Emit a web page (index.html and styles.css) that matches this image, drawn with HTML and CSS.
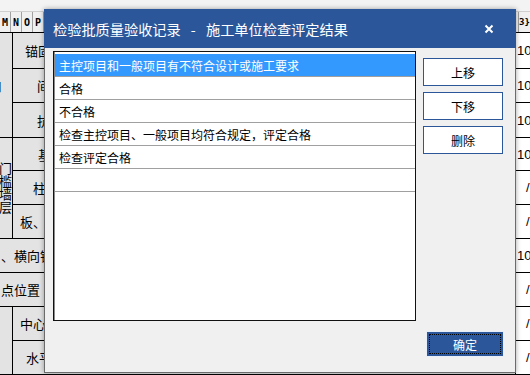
FILE: index.html
```html
<!DOCTYPE html>
<html lang="zh-CN">
<head>
  <meta charset="UTF-8" />
  <title>检验批质量验收记录</title>
  <link rel="stylesheet" href="styles.css">
</head>
<body>
  <!-- hoja de fondo -->
  <div class="sheet">
    <div class="topband"></div>
    <div class="colhead">
      <span class="ch">M</span>
      <span class="ch">N</span>
      <span class="ch">O</span>
      <span class="ch">P</span>
      <span class="ch-fill"></span>
      <span class="ch ch-last">3}</span>
    </div>
    <div class="grid">
      <div class="cell a r1-3 edge"><span class="cut">洞口</span></div>
      <div class="cell b pl-12">锚固</div>
      <div class="cell c num">10</div>
      <div class="cell b pl-24">间距</div>
      <div class="cell c num">10</div>
      <div class="cell b pl-24">抗震</div>
      <div class="cell c num">10</div>

      <div class="cell a r4-6 edge"><span class="vtext">门槛墙层</span></div>
      <div class="cell b pl-25">基础</div>
      <div class="cell c num">10</div>
      <div class="cell b pl-20">柱</div>
      <div class="cell c slash">/</div>
      <div class="cell b pl-7">板、墙</div>
      <div class="cell c slash">/</div>

      <div class="cell ab pl-21">、横向钢筋</div>
      <div class="cell c num">10</div>
      <div class="cell ab pl-21">点位置</div>
      <div class="cell c slash">/</div>

      <div class="cell a r9-10"></div>
      <div class="cell b pl-7">中心线</div>
      <div class="cell c slash">/</div>
      <div class="cell b pl-13">水平高差</div>
      <div class="cell c slash">/</div>
    </div>
  </div>

  <!-- ventana de dialogo -->
  <div class="dialog">
    <div class="dlg-title">
      <span>检验批质量验收记录 - 施工单位检查评定结果</span>
      <svg class="close" width="10" height="10" viewBox="0 0 10 10">
        <path d="M1.5 1.5 L8.5 8.5 M8.5 1.5 L1.5 8.5" stroke="#fff" stroke-width="2" fill="none"/>
      </svg>
    </div>
    <div class="dlg-body">
      <div class="list">
        <div class="item selected">主控项目和一般项目有不符合设计或施工要求</div>
        <div class="item">合格</div>
        <div class="item">不合格</div>
        <div class="item">检查主控项目、一般项目均符合规定，评定合格</div>
        <div class="item">检查评定合格</div>
        <div class="item"></div>
      </div>
      <div class="side">
        <button class="btn">上移</button>
        <button class="btn">下移</button>
        <button class="btn">删除</button>
      </div>
    </div>
    <div class="dlg-foot">
      <button class="ok">确定</button>
    </div>
  </div>
</body>
</html>
```

FILE: styles.css
```css
* {
  box-sizing: border-box;
}
body {
  margin: 0;
  width: 530px;
  height: 375px;
  overflow: hidden;
  position: relative;
  background: #fff;
  font-family: "Noto Sans CJK SC", sans-serif;
  color: #000;
}
.sheet {
  width: 530px;
  height: 375px;
  overflow: hidden;
  font-size: 13px;
}
.topband {
  height: 12px;
  background: #f3f3f3;
  border-bottom: 1px solid #cfcfcf;
}
.colhead {
  display: flex;
  height: 21px;
  background: #f0f0f0;
  border-bottom: 1px solid #000;
}
.ch {
  width: 11px;
  border-right: 1px solid #a0a0a0;
  font-family: "DejaVu Sans Mono", monospace;
  font-size: 10px;
  font-weight: bold;
  display: flex;
  align-items: center;
  justify-content: center;
}
.ch-fill { flex: 1; }
.ch-last {
  width: 12px;
  border-left: 1px solid #a0a0a0;
  border-right: none;
  justify-content: flex-start;
  font-size: 9px;
}
.grid {
  display: grid;
  margin-left: -20px;
  grid-template-columns: 33px 503px 40px;
  grid-template-rows: 36px 34px 35px 33px 34px 34px 34px 34px 34px 34px;
}
.cell {
  border-right: 1px solid #000;
  border-bottom: 1px solid #000;
  background: #e3e3e3;
  display: flex;
  align-items: center;
  white-space: nowrap;
  overflow: hidden;
}
.a { grid-column: 1; }
.b { grid-column: 2; }
.c { grid-column: 3; background: #fff; }
.ab { grid-column: 1 / 3; }
.r1-3 { grid-row: 1 / 4; }
.r4-6 { grid-row: 4 / 7; }
.r9-10 { grid-row: 9 / 11; }
.edge { justify-content: flex-end; }
.cut { margin-right: 10px; }
.vtext {
  writing-mode: vertical-rl;
  font-size: 13px;
  line-height: 13px;
  margin-right: 0;
}
.pl-7 { padding-left: 7px; }
.pl-12 { padding-left: 12px; }
.pl-13 { padding-left: 13px; }
.pl-20 { padding-left: 20px; }
.pl-21 { padding-left: 21px; }
.pl-24 { padding-left: 24px; }
.pl-25 { padding-left: 25px; }
.num { padding-left: 1px; font-family: "Liberation Sans", sans-serif; }
.slash { padding-left: 10px; font-family: "Liberation Sans", sans-serif; }

.dialog {
  position: absolute;
  left: 44px;
  top: 9px;
  width: 472px;
  height: 364px;
  background: #f0f0f0;
  border: 1px solid #6b6b6b;
  box-shadow: 0 0 5px rgba(0, 0, 0, 0.35);
  display: flex;
  flex-direction: column;
}
.dlg-title {
  height: 39px;
  margin: -1px -1px 0 -1px;
  padding: 0 22px 0 9px;
  background: #2b579a;
  color: #fff;
  font-size: 14.2px;
  word-spacing: 7px;
  display: flex;
  align-items: center;
  justify-content: space-between;
}
.dlg-body {
  display: flex;
  padding: 3px 12px 0 8px;
}
.list {
  width: 363px;
  height: 270px;
  background: #fff;
  border: 1px solid #111;
  padding-top: 2px;
  box-shadow: inset 1px 0 0 #8a8a8a;
}
.item {
  height: 23px;
  border-bottom: 1px solid #a0a0a0;
  padding-left: 4px;
  font-size: 12px;
  display: flex;
  align-items: center;
  margin-left: 1px;
}
.selected {
  background: #3399ff;
  color: #fff;
}
.side {
  display: flex;
  flex-direction: column;
  gap: 6px;
  margin: 7px 0 0 7px;
}
.btn {
  width: 80px;
  height: 28px;
  background: #fff;
  border: 1px solid #2b579a;
  font-family: "Noto Sans CJK SC", sans-serif;
  font-size: 12px;
  color: #000;
  padding: 0;
}
.dlg-foot {
  display: flex;
  justify-content: flex-end;
  padding: 10px 11px 0 0;
}
.ok {
  width: 78px;
  height: 26px;
  background: #2b579a;
  border: 1px solid #e8eef7;
  color: #fff;
  font-family: "Noto Sans CJK SC", sans-serif;
  font-size: 12px;
  padding: 0;
  outline: 1px dotted #000;
  outline-offset: -4px;
}
```
